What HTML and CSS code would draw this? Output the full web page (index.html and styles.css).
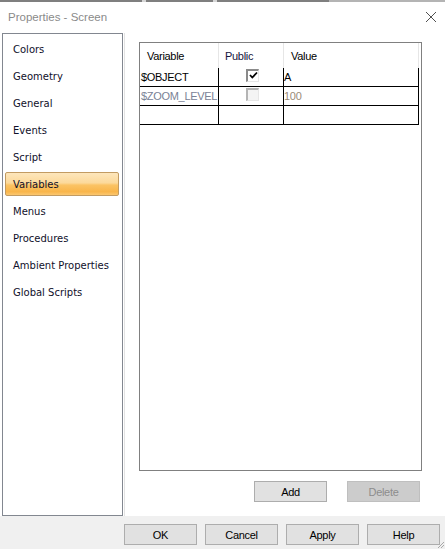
FILE: index.html
```html
<!DOCTYPE html>
<html>
<head>
<meta charset="utf-8">
<link rel="stylesheet" href="styles.css">
</head>
<body>
<div class="window">
  <div class="topstrip">
    <span class="seg s1"></span><span class="gap"></span><span class="seg s2"></span><span class="gap"></span><span class="seg s3"></span><span class="seg s4"></span>
  </div>
  <div class="titlebar">
    <span class="title">Properties - Screen</span>
    <svg class="close" width="12" height="12" viewBox="0 0 12 12"><path d="M1 1 L11 11 M11 1 L1 11" stroke="#505050" stroke-width="1" fill="none"/></svg>
  </div>
  <div class="main">
    <div class="listbox">
      <div class="item">Colors</div>
      <div class="item">Geometry</div>
      <div class="item">General</div>
      <div class="item">Events</div>
      <div class="item">Script</div>
      <div class="item selected">Variables</div>
      <div class="item">Menus</div>
      <div class="item">Procedures</div>
      <div class="item">Ambient Properties</div>
      <div class="item">Global Scripts</div>
    </div>
    <div class="panel">
      <div class="grid">
        <div class="hrow">
          <div class="hcell c1">Variable</div>
          <div class="hcell c2 pub">Public</div>
          <div class="hcell c3">Value</div>
        </div>
        <div class="row">
          <div class="cell c1">$OBJECT</div>
          <div class="cell c2 center"><span class="chk"><svg width="9" height="9" viewBox="0 0 9 9"><path d="M1 4 L3.3 6.5 L8 1.5" stroke="#000" stroke-width="1.8" fill="none"/></svg></span></div>
          <div class="cell c3">A</div>
        </div>
        <div class="row dis">
          <div class="cell c1 gray1">$ZOOM_LEVEL</div>
          <div class="cell c2 center"><span class="chk off"></span></div>
          <div class="cell c3 gray2">100</div>
        </div>
        <div class="row">
          <div class="cell c1"></div>
          <div class="cell c2"></div>
          <div class="cell c3"></div>
        </div>
      </div>
      <div class="gridbtns">
        <button class="btn">Add</button>
        <button class="btn disabled">Delete</button>
      </div>
    </div>
  </div>
  <div class="bottombar">
    <button class="btn">OK</button>
    <button class="btn">Cancel</button>
    <button class="btn">Apply</button>
    <button class="btn">Help</button>
    <svg class="grip" width="9" height="9" viewBox="0 0 9 9"><path d="M8 2 L2 8 M8 5 L5 8" stroke="#a8a8a8" stroke-width="1" fill="none"/></svg>
  </div>
</div>
</body>
</html>
```
FILE: styles.css
```css
html, body {
  margin: 0;
  padding: 0;
  background: #ffffff;
}
.window {
  width: 445px;
  height: 549px;
  position: relative;
  overflow: hidden;
  font-family: "Liberation Sans", Arial, sans-serif;
  background: #ffffff;
}
.topstrip {
  display: flex;
  height: 2px;
}
.seg { display: block; height: 2px; background: #7f7f7f; }
.gap { display: block; width: 4px; height: 2px; background: #d6d6d6; }
.s1 { width: 142px; }
.s2 { width: 67px; }
.s3 { width: 112px; }
.s4 { flex: 1; background: #b4b4b4; }
.titlebar {
  height: 31px;
  display: flex;
  align-items: center;
  justify-content: space-between;
  padding: 0 8px 0 8px;
}
.title {
  font-size: 11.5px;
  color: #8a8a8a;
  margin-top: -2px;
}
.close { margin-right: 0; margin-top: -2px; }
.main {
  height: 483px;
  display: flex;
}
.listbox {
  margin-left: 2px;
  width: 119px;
  height: 478px;
  border: 1px solid #828790;
  padding-top: 3px;
  box-sizing: content-box;
  font-family: "DejaVu Sans", Verdana, sans-serif;
  font-size: 10px;
  color: #10102a;
}
.item {
  height: 22px;
  margin: 0 3px 3px 2px;
  border: 1px solid transparent;
  border-radius: 2px;
  padding-left: 7px;
  display: flex;
  align-items: center;
}
.item.selected {
  border-color: #c29b62;
  background: linear-gradient(to bottom, #fde6bc 0%, #fcd99a 45%, #fbc364 55%, #f9b54a 85%, #fbc771 100%);
}
.panel {
  margin-left: 1px;
  flex: 1;
  border-left: 1px solid #e3e3e3;
  padding-left: 14px;
  padding-top: 9px;
}
.grid {
  width: 281px;
  height: 427px;
  border: 1px solid #808080;
  font-size: 11px;
  letter-spacing: -0.3px;
  color: #000;
}
.hrow {
  display: flex;
  height: 25px;
}
.hcell {
  border-right: 1px solid #e6e6e6;
  padding-left: 7px;
  padding-top: 1px;
  display: flex;
  align-items: center;
  box-sizing: border-box;
}
.pub { color: #14143c; padding-left: 6px; }
.c1 { width: 79px; }
.c2 { width: 65px; }
.c3 { width: 135px; }
.row {
  display: flex;
  width: 279px;
  height: 19px;
  border-bottom: 1px solid #000;
  box-sizing: border-box;
}
.cell {
  border-right: 1px solid #000;
  box-sizing: border-box;
  padding-left: 1px;
  padding-bottom: 1px;
  display: flex;
  align-items: center;
  white-space: nowrap;
  overflow: hidden;
}
.cell.c3 { padding-left: 0; }
.center { justify-content: center; padding-left: 0; }
.gray1 { color: #7a8296; }
.gray2 { color: #9a8c78; }
.chk {
  width: 13px;
  height: 13px;
  box-sizing: border-box;
  border-top: 2px solid #8a8a8a;
  border-left: 2px solid #8a8a8a;
  border-bottom: 1px solid #e6e6e6;
  border-right: 1px solid #e6e6e6;
  background: #ffffff;
  display: flex;
  align-items: center;
  justify-content: center;
  margin-left: 3px;
  margin-top: -3px;
}
.chk.off {
  border-top-color: #b4b4b4;
  border-left-color: #b4b4b4;
  background: #f4f4f4;
}
.gridbtns {
  width: 281px;
  display: flex;
  justify-content: flex-end;
  gap: 20px;
  margin-top: 10px;
}
.btn {
  width: 73px;
  height: 21px;
  box-sizing: border-box;
  border: 1px solid #adadad;
  background: #e1e1e1;
  font-family: "Liberation Sans", Arial, sans-serif;
  font-size: 11px;
  letter-spacing: -0.3px;
  color: #000;
  padding: 0;
  margin: 0;
}
.btn.disabled {
  background: #cccccc;
  border-color: #bfbfbf;
  color: #8d8d8d;
}
.bottombar {
  height: 33px;
  background: #f0f0f0;
  display: flex;
  justify-content: flex-end;
  gap: 8px;
  padding: 8px 5px 0 0;
  box-sizing: border-box;
  position: relative;
}
.grip {
  position: absolute;
  right: 0;
  bottom: 0;
}
```
